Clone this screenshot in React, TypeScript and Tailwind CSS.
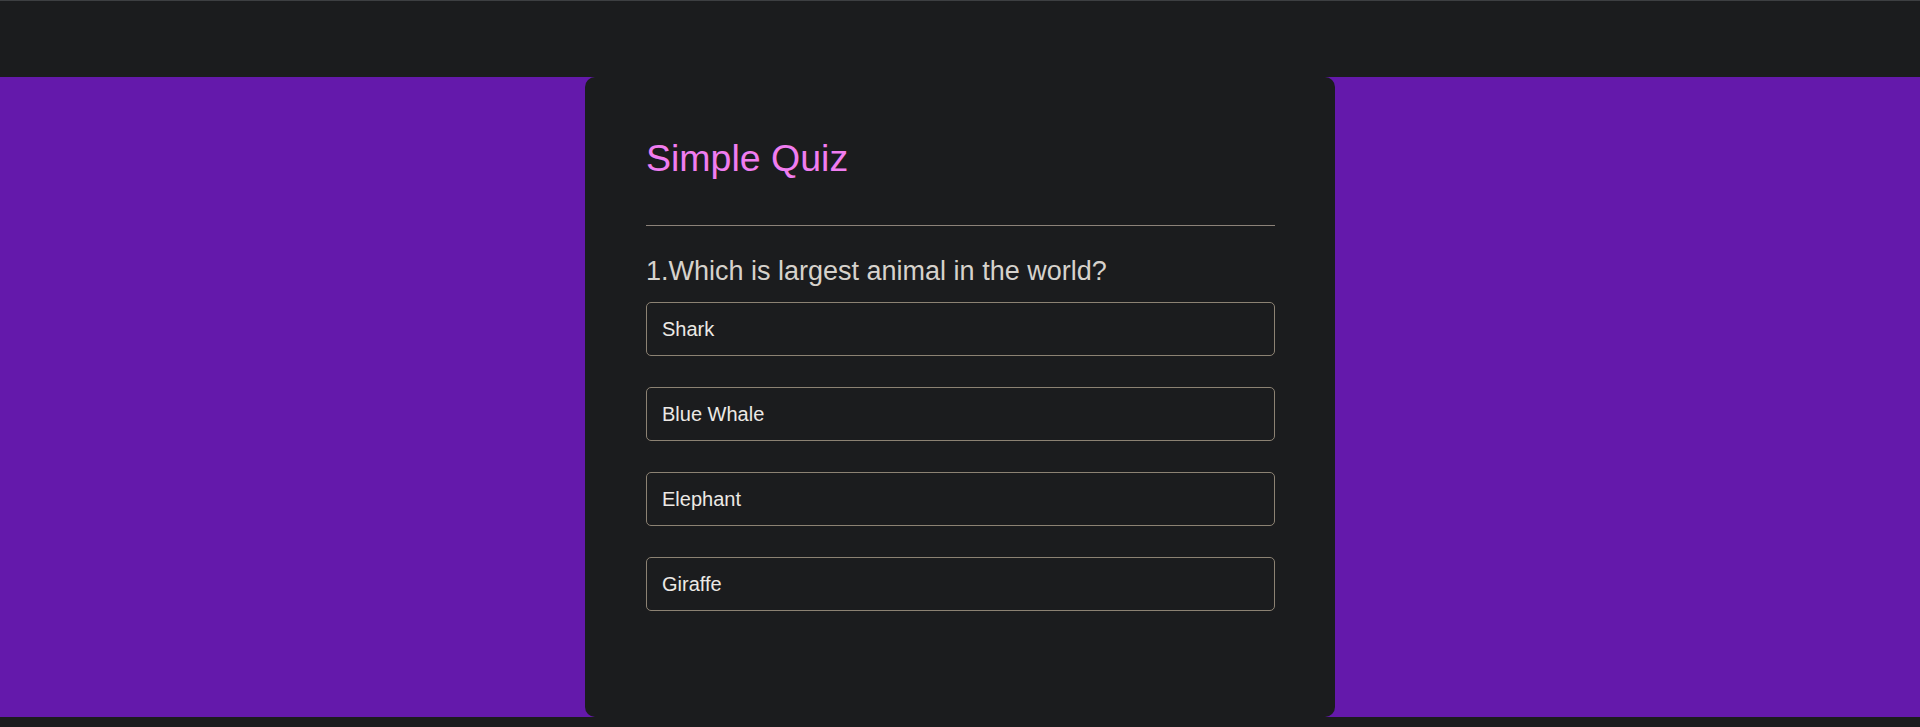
import React from "react";

const options = ["Shark", "Blue Whale", "Elephant", "Giraffe"];

export default function App() {
  return (
    <div
      className="w-full h-[727px] bg-[#1b1c1e] flex flex-col"
      style={{ fontFamily: '"Liberation Sans", Arial, sans-serif' }}
    >
      <div className="h-[77px] shrink-0 border-t border-[#3d3f42]" />
      <div className="h-[640px] shrink-0 bg-[#6419ab] flex justify-center">
        <div className="w-[750px] h-full bg-[#1b1c1e] rounded-[10px] pl-[61px] pr-[60px] pt-[60px]">
          <h1 className="text-[37.5px] leading-[43px] text-[#f07df0] m-0">Simple Quiz</h1>
          <div className="mt-[45px] h-px bg-[#8c8279]" />
          <h2 className="mt-[30px] text-[27px] leading-[31px] text-[#d6d2cc]">
            1.Which is largest animal in the world?
          </h2>
          <div className="mt-[15px] flex flex-col gap-[31px]">
            {options.map((o) => (
              <div
                key={o}
                className="h-[54px] border border-[#8c8273] rounded-[5px] flex items-center pl-[15px] text-[20px] text-[#ece9e5]"
              >
                {o}
              </div>
            ))}
          </div>
        </div>
      </div>
    </div>
  );
}
